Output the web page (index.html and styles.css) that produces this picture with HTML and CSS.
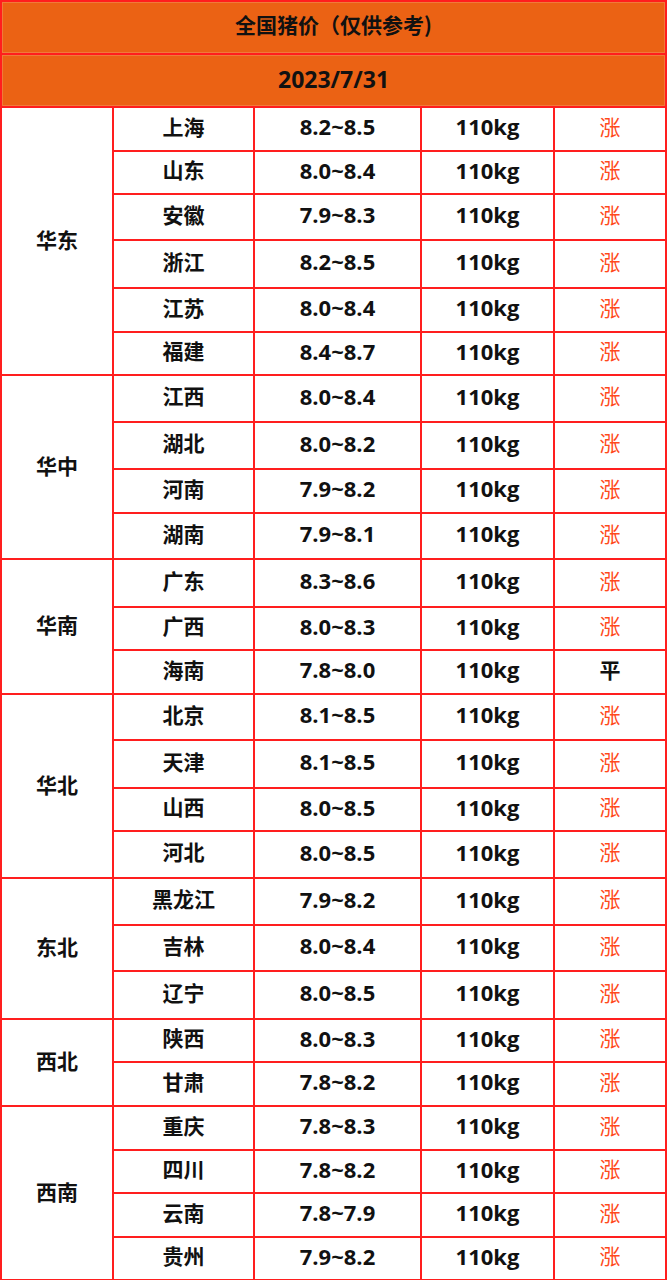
FILE: index.html
```html
<!DOCTYPE html>
<html lang="zh-CN">
<head>
<meta charset="utf-8">
<title>全国猪价</title>
<link rel="stylesheet" href="styles.css">
</head>
<body>
<table class="price-table">
  <colgroup>
    <col class="c-region"><col class="c-prov"><col class="c-price"><col class="c-weight"><col class="c-trend">
  </colgroup>
  <thead>
    <tr class="head"><th colspan="5" class="title">全国猪价（仅供参考)</th></tr>
    <tr class="head"><th colspan="5" class="date">2023/7/31</th></tr>
  </thead>
  <tbody>
    <tr class="h44"><td class="region" rowspan="6">华东</td><td class="prov">上海</td><td class="num">8.2~8.5</td><td class="num">110kg</td><td class="up">涨</td></tr>
    <tr class="h43"><td class="prov">山东</td><td class="num">8.0~8.4</td><td class="num">110kg</td><td class="up">涨</td></tr>
    <tr class="h46"><td class="prov">安徽</td><td class="num">7.9~8.3</td><td class="num">110kg</td><td class="up">涨</td></tr>
    <tr class="h48"><td class="prov">浙江</td><td class="num">8.2~8.5</td><td class="num">110kg</td><td class="up">涨</td></tr>
    <tr class="h44"><td class="prov">江苏</td><td class="num">8.0~8.4</td><td class="num">110kg</td><td class="up">涨</td></tr>
    <tr class="h43"><td class="prov">福建</td><td class="num">8.4~8.7</td><td class="num">110kg</td><td class="up">涨</td></tr>

    <tr class="h47"><td class="region" rowspan="4">华中</td><td class="prov">江西</td><td class="num">8.0~8.4</td><td class="num">110kg</td><td class="up">涨</td></tr>
    <tr class="h47"><td class="prov">湖北</td><td class="num">8.0~8.2</td><td class="num">110kg</td><td class="up">涨</td></tr>
    <tr class="h44"><td class="prov">河南</td><td class="num">7.9~8.2</td><td class="num">110kg</td><td class="up">涨</td></tr>
    <tr class="h46"><td class="prov">湖南</td><td class="num">7.9~8.1</td><td class="num">110kg</td><td class="up">涨</td></tr>

    <tr class="h48"><td class="region" rowspan="3">华南</td><td class="prov">广东</td><td class="num">8.3~8.6</td><td class="num">110kg</td><td class="up">涨</td></tr>
    <tr class="h43"><td class="prov">广西</td><td class="num">8.0~8.3</td><td class="num">110kg</td><td class="up">涨</td></tr>
    <tr class="h44"><td class="prov">海南</td><td class="num">7.8~8.0</td><td class="num">110kg</td><td class="flat">平</td></tr>

    <tr class="h46"><td class="region" rowspan="4">华北</td><td class="prov">北京</td><td class="num">8.1~8.5</td><td class="num">110kg</td><td class="up">涨</td></tr>
    <tr class="h48"><td class="prov">天津</td><td class="num">8.1~8.5</td><td class="num">110kg</td><td class="up">涨</td></tr>
    <tr class="h43"><td class="prov">山西</td><td class="num">8.0~8.5</td><td class="num">110kg</td><td class="up">涨</td></tr>
    <tr class="h47"><td class="prov">河北</td><td class="num">8.0~8.5</td><td class="num">110kg</td><td class="up">涨</td></tr>

    <tr class="h47"><td class="region" rowspan="3">东北</td><td class="prov">黑龙江</td><td class="num">7.9~8.2</td><td class="num">110kg</td><td class="up">涨</td></tr>
    <tr class="h46"><td class="prov">吉林</td><td class="num">8.0~8.4</td><td class="num">110kg</td><td class="up">涨</td></tr>
    <tr class="h48"><td class="prov">辽宁</td><td class="num">8.0~8.5</td><td class="num">110kg</td><td class="up">涨</td></tr>

    <tr class="h43"><td class="region" rowspan="2">西北</td><td class="prov">陕西</td><td class="num">8.0~8.3</td><td class="num">110kg</td><td class="up">涨</td></tr>
    <tr class="h44"><td class="prov">甘肃</td><td class="num">7.8~8.2</td><td class="num">110kg</td><td class="up">涨</td></tr>

    <tr class="h44"><td class="region" rowspan="4">西南</td><td class="prov">重庆</td><td class="num">7.8~8.3</td><td class="num">110kg</td><td class="up">涨</td></tr>
    <tr class="h43"><td class="prov">四川</td><td class="num">7.8~8.2</td><td class="num">110kg</td><td class="up">涨</td></tr>
    <tr class="h44"><td class="prov">云南</td><td class="num">7.8~7.9</td><td class="num">110kg</td><td class="up">涨</td></tr>
    <tr class="h43"><td class="prov">贵州</td><td class="num">7.9~8.2</td><td class="num">110kg</td><td class="up">涨</td></tr>
  </tbody>
</table>
</body>
</html>
```

FILE: styles.css
```css
html, body {
  margin: 0;
  padding: 0;
  background: #ffffff;
}

.price-table {
  border-collapse: collapse;
  table-layout: fixed;
  width: 667px;
  font-family: "Open Sans", "Noto Sans CJK SC", sans-serif;
  font-weight: 700;
  color: #111111;
}

.c-region { width: 112px; }
.c-prov { width: 141px; }
.c-price { width: 167px; }
.c-weight { width: 133px; }
.c-trend { width: 112px; }

.price-table th,
.price-table td {
  border: 2px solid #ff1e1e;
  padding: 0 0 6px 0;
  text-align: center;
  vertical-align: middle;
  line-height: 1;
}

.price-table td.region {
  padding-bottom: 4px;
}

.head { height: 53px; }

.head th {
  background: #eb6214;
  box-shadow: inset 0 0 0 1px #f07a3a;
}

.title {
  font-family: "Noto Sans CJK SC", sans-serif;
  font-size: 21px;
  font-weight: 700;
}

.price-table th.date {
  font-size: 23px;
  font-weight: 700;
  padding-bottom: 3px;
}

.region,
.prov,
.up,
.flat {
  font-family: "Noto Sans CJK SC", sans-serif;
  font-size: 21px;
}

.num {
  font-size: 22px;
}

.up {
  color: #ff4a1c;
  font-weight: 400;
}

.flat {
  color: #111111;
}

.h43 { height: 43px; }
.h44 { height: 44px; }
.h46 { height: 46px; }
.h47 { height: 47px; }
.h48 { height: 48px; }
```
